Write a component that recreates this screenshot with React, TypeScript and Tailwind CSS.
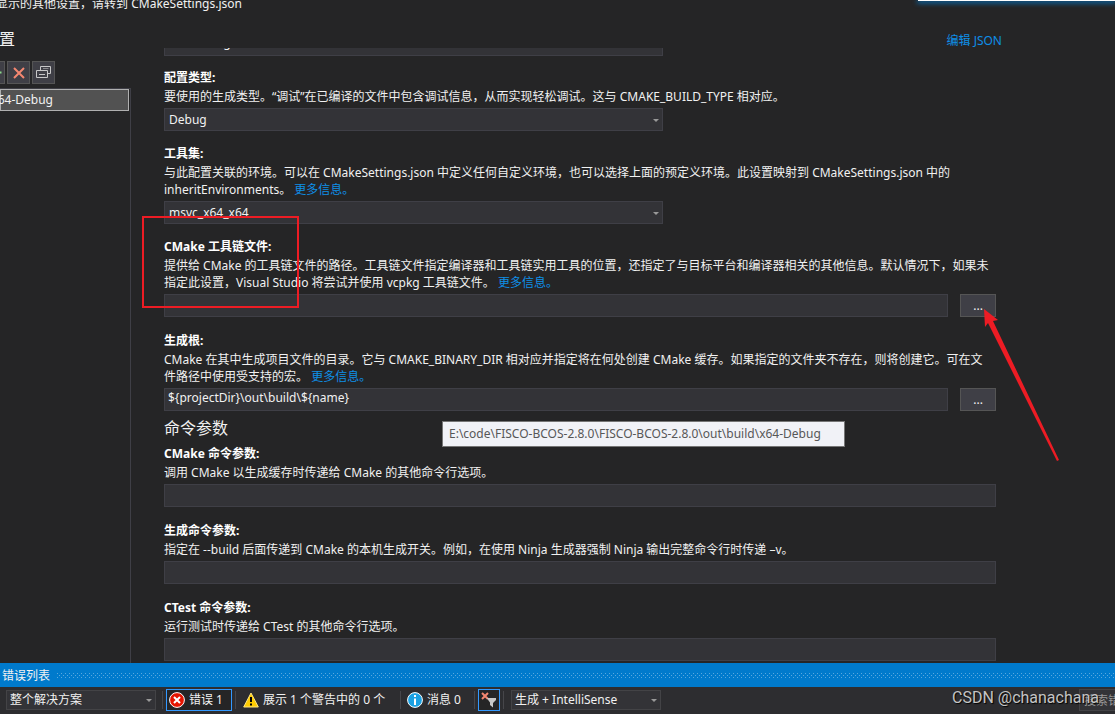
import type { ReactNode } from "react"

interface FieldProps {
  id: string
  label: string
  description: ReactNode
  children: ReactNode
}

function Field({ id, label, description, children }: FieldProps) {
  return (
    <div className="relative">
      <label htmlFor={id} className="block font-bold leading-[21px] text-white">
        {label}
      </label>
      <p className="mb-[3px] whitespace-nowrap leading-[17px]">{description}</p>
      {children}
    </div>
  )
}

function MoreInfo() {
  return (
    <a href="#more" className="text-[#0e8fe6]">
      更多信息。
    </a>
  )
}

function Caret() {
  return (
    <svg
      className="pointer-events-none absolute right-1 top-1/2 -mt-px h-[3px] w-[6px]"
      viewBox="0 0 6 3"
      fill="#999999"
    >
      <path d="M0 0h6L3 3z" />
    </svg>
  )
}

function FieldSelect({ id, value }: { id: string; value: string }) {
  return (
    <div className="relative w-[60%]">
      <select
        id={id}
        className="block h-[23px] w-full appearance-none border border-[#3f3f46] bg-[#333337] px-1 text-[#f1f1f1]"
      >
        <option>{value}</option>
      </select>
      <Caret />
    </div>
  )
}

function TextBox({ id, value = "" }: { id: string; value?: string }) {
  return (
    <input
      id={id}
      type="text"
      defaultValue={value}
      className="block h-[23px] w-full min-w-0 border border-[#3f3f46] bg-[#333337] px-[3px] pb-1 text-[#f1f1f1]"
    />
  )
}

function PathBox({ id, value }: { id: string; value?: string }) {
  return (
    <div className="flex gap-3">
      <TextBox id={id} value={value} />
      <button
        type="button"
        aria-label="浏览"
        className="h-[23px] w-9 shrink-0 border border-[#555555] bg-[#3f3f46] leading-[21px] text-[#f1f1f1]"
      >
        ...
      </button>
    </div>
  )
}

function Separator() {
  return <div className="h-[18px] w-px shrink-0 bg-[#46464a]" />
}

function Sidebar() {
  return (
    <aside className="flex w-[131px] shrink-0 flex-col">
      <h1 className="flex w-[15px] justify-end whitespace-nowrap text-base leading-[19px]">配置</h1>
      <div className="mt-3 flex gap-[2px]">
        <button
          type="button"
          aria-label="添加"
          className="h-[23px] w-[5px] overflow-hidden border border-l-0 border-[#555555] bg-[#3f3f46]"
        >
          <svg viewBox="0 0 4 21" className="h-[21px] w-1">
            <path d="M0 10.5h1.5" stroke="#8bd98b" strokeWidth="2" />
          </svg>
        </button>
        <button
          type="button"
          aria-label="删除"
          className="flex h-[23px] w-[23px] items-center justify-center border border-[#555555] bg-[#3f3f46]"
        >
          <svg viewBox="0 0 12 12" className="h-3 w-3">
            <path d="M1 1l10 10M11 1L1 11" stroke="#f48771" strokeWidth="2" />
          </svg>
        </button>
        <button
          type="button"
          aria-label="克隆"
          className="flex h-[23px] w-[23px] items-center justify-center border border-[#555555] bg-[#3f3f46]"
        >
          <svg viewBox="0 0 17 17" className="h-[17px] w-[17px]" fill="none" stroke="#c8c8c8">
            <path d="M5.500 6V2.500h10v7H13" />
            <path d="M8 4.500h5.500" stroke="#8a8a8d" />
            <path d="M1.500 6.500h11v7h-11zM4 10.500h6" />
          </svg>
        </button>
      </div>
      <div className="mt-1 flex-1 border-r border-t border-[#3f3f46] pr-px">
        <div className="flex h-[22px] border border-[#b0b0b0] bg-[#525252]">
          <span className="flex w-[52px] justify-end whitespace-nowrap leading-5">x64-Debug</span>
        </div>
      </div>
    </aside>
  )
}

function Settings() {
  return (
    <div className="mt-[18px] min-w-0 flex-1 overflow-hidden pl-[33px]">
      <div className="w-[87.5%]">
        <div className="-mt-[15px] mb-[11px] w-[60%]">
          <input
            type="text"
            aria-label="配置名称"
            defaultValue="x64-Debug"
            className="block h-[23px] w-full border border-[#3f3f46] bg-[#333337] px-1 pb-[5px] text-[#f1f1f1]"
          />
        </div>

        <div className="flex flex-col gap-3">
          <Field
            id="type"
            label="配置类型:"
            description="要使用的生成类型。“调试”在已编译的文件中包含调试信息，从而实现轻松调试。这与 CMAKE_BUILD_TYPE 相对应。"
          >
            <FieldSelect id="type" value="Debug" />
          </Field>
          <Field
            id="toolset"
            label="工具集:"
            description={
              <>
                与此配置关联的环境。可以在 CMakeSettings.json 中定义任何自定义环境，也可以选择上面的预定义环境。此设置映射到 CMakeSettings.json 中的
                <br />
                inheritEnvironments。 <MoreInfo />
              </>
            }
          >
            <FieldSelect id="toolset" value="msvc_x64_x64" />
          </Field>
        </div>

        <div className="mt-3 flex flex-col gap-[13px]">
          <div className="relative z-10">
            <Field
              id="toolchain"
              label="CMake 工具链文件:"
              description={
                <>
                  提供给 CMake 的工具链文件的路径。工具链文件指定编译器和工具链实用工具的位置，还指定了与目标平台和编译器相关的其他信息。默认情况下，如果未
                  <br />
                  指定此设置，Visual Studio 将尝试并使用 vcpkg 工具链文件。 <MoreInfo />
                </>
              }
            >
              <PathBox id="toolchain" />
            </Field>
            {/* red marker box and arrow */}
            <div className="pointer-events-none absolute -left-[22px] -top-5 h-[92px] w-[157px] border-2 border-[#ed1c24]" />
            <svg
              className="pointer-events-none absolute -right-16 top-[73px] h-[153px] w-[76px]"
              viewBox="0 0 76 153"
              fill="#ed1c24"
            >
              <path d="M0 0L14 11L9 12L75 151L73 152L4 14L1 18Z" />
            </svg>
          </div>
          <div className="relative">
            <Field
              id="root-dir"
              label="生成根:"
              description={
                <>
                  CMake 在其中生成项目文件的目录。它与 CMAKE_BINARY_DIR 相对应并指定将在何处创建 CMake 缓存。如果指定的文件夹不存在，则将创建它。可在文
                  <br />
                  件路径中使用受支持的宏。 <MoreInfo />
                </>
              }
            >
              <PathBox id="root-dir" value="${projectDir}\out\build\${name}" />
            </Field>
            <div
              role="tooltip"
              className="absolute left-[278px] top-[91px] min-w-[403px] whitespace-nowrap border border-[#767676] bg-[#f1f2f7] px-[6px] leading-6 text-[#575757]"
            >
              E:\code\FISCO-BCOS-2.8.0\FISCO-BCOS-2.8.0\out\build\x64-Debug
            </div>
          </div>
        </div>

        <h2 className="mb-[5px] mt-[7px] text-base leading-5">命令参数</h2>
        <div className="flex flex-col gap-[13px]">
          <Field
            id="cmake-args"
            label="CMake 命令参数:"
            description="调用 CMake 以生成缓存时传递给 CMake 的其他命令行选项。"
          >
            <TextBox id="cmake-args" />
          </Field>
          <Field
            id="build-args"
            label="生成命令参数:"
            description="指定在 --build 后面传递到 CMake 的本机生成开关。例如，在使用 Ninja 生成器强制 Ninja 输出完整命令行时传递 –v。"
          >
            <TextBox id="build-args" />
          </Field>
          <Field
            id="ctest-args"
            label="CTest 命令参数:"
            description="运行测试时传递给 CTest 的其他命令行选项。"
          >
            <TextBox id="ctest-args" />
          </Field>
        </div>
      </div>
    </div>
  )
}

function ToolbarSelect({ label, value }: { label: string; value: string }) {
  return (
    <div className="relative w-[150px] shrink-0">
      <select
        aria-label={label}
        className="block h-5 w-full appearance-none border border-[#434346] bg-[#333337] px-[3px] text-[#f1f1f1]"
      >
        <option>{value}</option>
      </select>
      <Caret />
    </div>
  )
}

function ErrorList() {
  return (
    <section className="shrink-0 bg-[#2d2d30]">
      <div className="flex h-6 items-center gap-[7px] bg-[#007acc] pl-[2px]">
        <h2 className="pt-px">错误列表</h2>
        <svg className="h-[5px] min-w-0 flex-1" aria-hidden="true">
          <pattern id="grip" width="4" height="4" patternUnits="userSpaceOnUse">
            <path d="M0 0h1v1H0zM2 2h1v1H2z" fill="#59a8de" />
          </pattern>
          <rect width="100%" height="5" fill="url(#grip)" />
        </svg>
      </div>
      <div className="relative flex h-[27px] items-center overflow-hidden whitespace-nowrap pb-px pl-[6px]">
        <ToolbarSelect label="范围" value="整个解决方案" />
        <div className="flex items-center gap-[3px] pl-[6px]">
          <Separator />
          <button
            type="button"
            className="flex h-[22px] w-[66px] items-center gap-1 border border-[#3399ff] bg-[#252526] pl-[2px]"
          >
            <svg viewBox="0 0 16 16" className="h-4 w-4 shrink-0">
              <circle cx="8" cy="8" r="7.400" fill="#e51400" stroke="#ffffff" />
              <path d="M5 5l6 6M11 5l-6 6" stroke="#ffffff" strokeWidth="2" />
            </svg>
            错误 1
          </button>
          <Separator />
        </div>
        <button type="button" className="ml-[7px] flex w-[157px] items-center gap-1">
          <svg viewBox="0 0 16 16" className="h-4 w-4 shrink-0">
            <path d="M8 1L15.300 15H.7z" fill="#ffcc00" stroke="#ffe680" strokeLinejoin="round" />
            <path d="M7 5h2v5H7zM7 11.500h2v2H7z" fill="#000000" />
          </svg>
          展示 1 个警告中的 0 个
        </button>
        <Separator />
        <button type="button" className="ml-[6px] flex w-[67px] items-center gap-1">
          <svg viewBox="0 0 16 16" className="h-4 w-4 shrink-0">
            <circle cx="8" cy="8" r="7.400" fill="#1ba1e2" stroke="#ffffff" />
            <path d="M7 3h2v2H7zM7 6.500h2V13H7z" fill="#ffffff" />
          </svg>
          消息 0
        </button>
        <Separator />
        <button
          type="button"
          aria-label="清除筛选器"
          className="mx-[3px] flex h-[22px] w-[22px] shrink-0 items-center justify-center border border-[#3399ff] bg-[#252526]"
        >
          <svg viewBox="0 0 16 16" className="h-4 w-4">
            <path d="M1 1l6 6M7 1l-6 6" stroke="#f48771" strokeWidth="2" />
            <path d="M6 6h9v2L12 11v4.500L9 13v-2.500L7.500 8.500z" fill="#c8c8c8" />
          </svg>
        </button>
        <Separator />
        <div className="w-[7px] shrink-0" />
        <ToolbarSelect label="来源" value="生成 + IntelliSense" />
        <input
          type="text"
          aria-label="搜索"
          placeholder="搜索错误列表"
          className="ml-auto h-[22px] w-9 border border-r-0 border-[#434346] bg-[#333337] pl-1 placeholder:text-[#999999]"
        />
        <span className="absolute right-4 top-0 font-['Roboto',sans-serif] text-base leading-[22px] text-[#c4c4c4] [text-shadow:1px_1px_1px_#000]">
          CSDN @chanachana
        </span>
      </div>
    </section>
  )
}

export default function App() {
  return (
    <div className="relative flex h-screen flex-col overflow-hidden bg-[#252526] font-['Noto_Sans','Noto_Sans_CJK_SC',sans-serif] text-xs text-[#f1f1f1]">
      <div className="absolute right-0 top-0 h-px w-[197px] bg-white shadow-[0_1px_5px_1px_#007acc]" />
      <header className="flex h-[30px] shrink-0 items-start">
        <p className="flex w-[242px] justify-end whitespace-nowrap leading-[8px]">
          显示的其他设置，请转到 CMakeSettings.json
        </p>
      </header>
      <main className="relative flex min-h-0 flex-1">
        <Sidebar />
        <Settings />
        <a href="#json" className="absolute right-[113px] top-px leading-5 text-[#0e8fe6]">
          编辑 JSON
        </a>
      </main>
      <ErrorList />
    </div>
  )
}
